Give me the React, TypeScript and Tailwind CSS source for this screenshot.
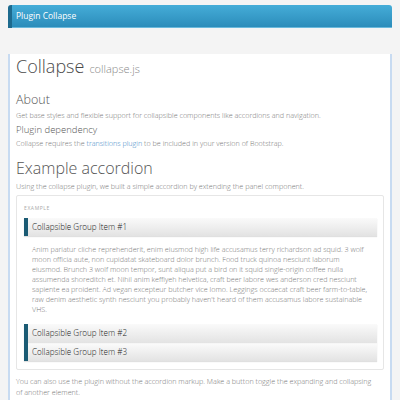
export default function App() {
  const items = ["Collapsible Group Item #2", "Collapsible Group Item #3"];
  return (
    <div className="min-h-[400px] bg-[#f4f4f4] pt-[5px] font-['Open_Sans',sans-serif]">
      <div className="mx-[8px] overflow-hidden rounded-t-[3px]">
        {/* Header bar */}
        <div className="flex h-[23px] items-center border-l-[4px] border-[#1d6a8e] bg-gradient-to-b from-[#45add8] to-[#2a8bb9] pl-[4px] text-[8.5px] text-white shadow-[inset_0_-1px_0_#6ab9dc]">
          Plugin Collapse
        </div>
        <div className="border-x-2 border-[#c8dbf1] bg-white px-[6px] pb-[20px] text-[#555]">
          <h1 className="mt-[26px] flex items-baseline gap-[5px] text-[18px] font-light leading-[24px] text-[#4a4a4a]">
            Collapse <span className="text-[11px] text-[#888]">collapse.js</span>
          </h1>
          <h2 className="mt-[11px] text-[12.5px] font-light leading-[16px] text-[#555]">About</h2>
          <p className="mt-[2px] text-[7.2px] font-light leading-[10px] text-[#777]">
            Get base styles and flexible support for collapsible components like accordions and navigation.
          </p>
          <h3 className="mt-[3px] text-[9.5px] font-light leading-[13px] text-[#555]">Plugin dependency</h3>
          <p className="mt-[2px] text-[7.2px] font-light leading-[10px] text-[#777]">
            Collapse requires the <a className="text-[#3e87c5]">transitions plugin</a> to be included in your version of Bootstrap.
          </p>
          <h2 className="mt-[10px] text-[16px] font-light leading-[20px] text-[#555]">Example accordion</h2>
          <p className="mt-[3px] text-[7.2px] font-light leading-[10px] text-[#777]">
            Using the collapse plugin, we built a simple accordion by extending the panel component.
          </p>

          {/* Example box */}
          <div className="mt-[4px] rounded-[2px] border border-[#e6e6e6] pb-[8px] pl-[7px] pr-[6px] pt-[8px]">
            <div className="text-[5px] uppercase leading-[8px] tracking-[0.12em] text-[#aaa]">Example</div>
            <div className="mt-[6px]">
              <div className="flex h-[18px] items-center border-l-[4px] border-[#1b5b74] bg-gradient-to-b from-[#fafafa] to-[#e3e3e3] pl-[4px] text-[8.1px] font-light text-[#222] shadow-[0_1px_1px_rgba(0,0,0,0.12)]">
                Collapsible Group Item #1
              </div>
              <p className="px-[8px] pb-[10px] pt-[8px] text-[7.2px] font-light leading-[10px] text-[#777]">
                Anim pariatur cliche reprehenderit, enim eiusmod high life accusamus terry richardson ad squid. 3 wolf moon officia aute, non cupidatat skateboard dolor brunch. Food truck quinoa nesciunt laborum eiusmod. Brunch 3 wolf moon tempor, sunt aliqua put a bird on it squid single-origin coffee nulla assumenda shoreditch et. Nihil anim keffiyeh helvetica, craft beer labore wes anderson cred nesciunt sapiente ea proident. Ad vegan excepteur butcher vice lomo. Leggings occaecat craft beer farm-to-table, raw denim aesthetic synth nesciunt you probably haven't heard of them accusamus labore sustainable VHS.
              </p>
              <div className="border-l-[4px] border-[#1b5b74] shadow-[0_1px_1px_rgba(0,0,0,0.12)]">
                {items.map((t, i) => (
                  <div
                    key={t}
                    className={
                      "flex h-[18.5px] items-center bg-gradient-to-b from-[#fafafa] to-[#e3e3e3] pl-[4px] text-[8.1px] font-light text-[#222]" +
                      (i > 0 ? " border-t border-[#f6f6f6]" : "")
                    }
                  >
                    {t}
                  </div>
                ))}
              </div>
            </div>
          </div>

          <p className="mt-[6px] pr-[12px] text-[7.2px] font-light leading-[11px] text-[#777]">
            You can also use the plugin without the accordion markup. Make a button toggle the expanding and collapsing of another element.
          </p>
        </div>
      </div>
    </div>
  );
}
